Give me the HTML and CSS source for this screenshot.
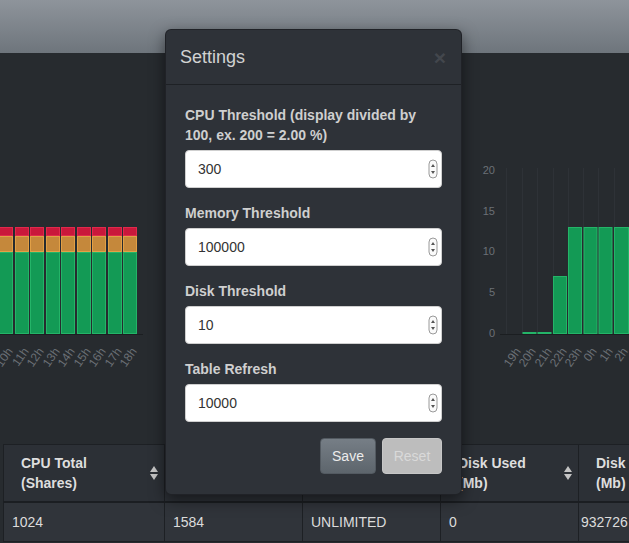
FILE: index.html
```html
<!DOCTYPE html>
<html>
<head>
<meta charset="utf-8">
<title>Settings</title>
<link rel="stylesheet" href="styles.css">
</head>
<body>
<div class="topbar"></div>

<div class="charts">
  <svg class="chart" width="165" height="391" viewBox="0 53 165 391">
    <line x1="0" y1="334.5" x2="143" y2="334.5" class="axis"/>
    <g class="stack">
      <rect class="r" x="-0.5" y="227.5" width="13" height="8"/><rect class="o" x="-0.5" y="236.5" width="13" height="15"/><rect class="g" x="-0.5" y="252.5" width="13" height="81"/>
      <rect class="r" x="15.5" y="227.5" width="13" height="8"/><rect class="o" x="15.5" y="236.5" width="13" height="15"/><rect class="g" x="15.5" y="252.5" width="13" height="81"/>
      <rect class="r" x="30.5" y="227.5" width="13" height="8"/><rect class="o" x="30.5" y="236.5" width="13" height="15"/><rect class="g" x="30.5" y="252.5" width="13" height="81"/>
      <rect class="r" x="46.5" y="227.5" width="13" height="8"/><rect class="o" x="46.5" y="236.5" width="13" height="15"/><rect class="g" x="46.5" y="252.5" width="13" height="81"/>
      <rect class="r" x="61.5" y="227.5" width="13" height="8"/><rect class="o" x="61.5" y="236.5" width="13" height="15"/><rect class="g" x="61.5" y="252.5" width="13" height="81"/>
      <rect class="r" x="77.5" y="227.5" width="13" height="8"/><rect class="o" x="77.5" y="236.5" width="13" height="15"/><rect class="g" x="77.5" y="252.5" width="13" height="81"/>
      <rect class="r" x="92.5" y="227.5" width="13" height="8"/><rect class="o" x="92.5" y="236.5" width="13" height="15"/><rect class="g" x="92.5" y="252.5" width="13" height="81"/>
      <rect class="r" x="108.5" y="227.5" width="13" height="8"/><rect class="o" x="108.5" y="236.5" width="13" height="15"/><rect class="g" x="108.5" y="252.5" width="13" height="81"/>
      <rect class="r" x="123.5" y="227.5" width="13" height="8"/><rect class="o" x="123.5" y="236.5" width="13" height="15"/><rect class="g" x="123.5" y="252.5" width="13" height="81"/>
    </g>
    <g class="xlab">
      <text x="10" y="349" transform="rotate(-55 10 349)">10h</text>
      <text x="26" y="349" transform="rotate(-55 26 349)">11h</text>
      <text x="41" y="349" transform="rotate(-55 41 349)">12h</text>
      <text x="57" y="349" transform="rotate(-55 57 349)">13h</text>
      <text x="72" y="349" transform="rotate(-55 72 349)">14h</text>
      <text x="88" y="349" transform="rotate(-55 88 349)">15h</text>
      <text x="103" y="349" transform="rotate(-55 103 349)">16h</text>
      <text x="119" y="349" transform="rotate(-55 119 349)">17h</text>
      <text x="134" y="349" transform="rotate(-55 134 349)">18h</text>
    </g>
  </svg>

  <svg class="chart" width="166" height="391" viewBox="463 53 166 391">
    <g class="grid">
      <line x1="506.5" y1="168" x2="506.5" y2="334"/>
      <line x1="522.5" y1="168" x2="522.5" y2="334"/>
      <line x1="537.5" y1="168" x2="537.5" y2="334"/>
      <line x1="553.5" y1="168" x2="553.5" y2="334"/>
      <line x1="568.5" y1="168" x2="568.5" y2="334"/>
      <line x1="583.5" y1="168" x2="583.5" y2="334"/>
      <line x1="598.5" y1="168" x2="598.5" y2="334"/>
      <line x1="614.5" y1="168" x2="614.5" y2="334"/>
    </g>
    <line x1="500" y1="334.5" x2="629" y2="334.5" class="axis"/>
    <g class="ylab">
      <text x="495" y="170">20</text>
      <text x="495" y="211">15</text>
      <text x="495" y="251">10</text>
      <text x="495" y="292">5</text>
      <text x="495" y="333">0</text>
    </g>
    <g class="stack">
      <rect class="g" x="523" y="332.5" width="13" height="1"/>
      <rect class="g" x="538" y="332.5" width="13" height="1"/>
      <rect class="g" x="553.5" y="276.5" width="13" height="57"/>
      <rect class="g" x="568.5" y="227.5" width="13" height="106"/>
      <rect class="g" x="584" y="227.5" width="13" height="106"/>
      <rect class="g" x="599" y="227.5" width="13" height="106"/>
      <rect class="g" x="614.5" y="227.5" width="14" height="106"/>
    </g>
    <g class="xlab">
      <text x="518" y="349" transform="rotate(-55 518 349)">19h</text>
      <text x="533" y="349" transform="rotate(-55 533 349)">20h</text>
      <text x="549" y="349" transform="rotate(-55 549 349)">21h</text>
      <text x="564" y="349" transform="rotate(-55 564 349)">22h</text>
      <text x="579" y="349" transform="rotate(-55 579 349)">23h</text>
      <text x="594" y="349" transform="rotate(-55 594 349)">0h</text>
      <text x="610" y="349" transform="rotate(-55 610 349)">1h</text>
      <text x="625" y="349" transform="rotate(-55 625 349)">2h</text>
    </g>
  </svg>
</div>

<div class="table">
  <div class="row head">
    <div class="th"><span>CPU Total<br>(Shares)</span><svg class="sort" width="8" height="14" viewBox="0 0 8 14"><polygon points="0,6 4,0 8,6"/><polygon points="0,8 8,8 4,14"/></svg></div>
    <div class="th"></div>
    <div class="th"></div>
    <div class="th"><span>Disk Used<br>(Mb)</span><svg class="sort" width="8" height="14" viewBox="0 0 8 14"><polygon points="0,6 4,0 8,6"/><polygon points="0,8 8,8 4,14"/></svg></div>
    <div class="th"><span>Disk<br>(Mb)</span></div>
  </div>
  <div class="row body">
    <div class="td">1024</div>
    <div class="td">1584</div>
    <div class="td">UNLIMITED</div>
    <div class="td">0</div>
    <div class="td last">932726</div>
  </div>
</div>

<div class="modal">
  <div class="modal-header">
    <h4 class="modal-title">Settings</h4>
    <span class="close">×</span>
  </div>
  <div class="modal-body">
    <div class="form-group">
      <label>CPU Threshold (display divided by 100, ex. 200 = 2.00 %)</label>
      <div class="input"><input type="text" value="300"><svg class="spin" width="10" height="20" viewBox="0 0 10 20"><rect x="1" y="1" width="8" height="18" rx="4" ry="4"/><polygon points="5,5 3,8 7,8"/><polygon points="3,12 7,12 5,15"/></svg></div>
    </div>
    <div class="form-group">
      <label>Memory Threshold</label>
      <div class="input"><input type="text" value="100000"><svg class="spin" width="10" height="20" viewBox="0 0 10 20"><rect x="1" y="1" width="8" height="18" rx="4" ry="4"/><polygon points="5,5 3,8 7,8"/><polygon points="3,12 7,12 5,15"/></svg></div>
    </div>
    <div class="form-group">
      <label>Disk Threshold</label>
      <div class="input"><input type="text" value="10"><svg class="spin" width="10" height="20" viewBox="0 0 10 20"><rect x="1" y="1" width="8" height="18" rx="4" ry="4"/><polygon points="5,5 3,8 7,8"/><polygon points="3,12 7,12 5,15"/></svg></div>
    </div>
    <div class="form-group">
      <label>Table Refresh</label>
      <div class="input"><input type="text" value="10000"><svg class="spin" width="10" height="20" viewBox="0 0 10 20"><rect x="1" y="1" width="8" height="18" rx="4" ry="4"/><polygon points="5,5 3,8 7,8"/><polygon points="3,12 7,12 5,15"/></svg></div>
    </div>
    <div class="actions">
      <button class="btn save">Save</button>
      <button class="btn reset">Reset</button>
    </div>
  </div>
</div>
</body>
</html>
```

FILE: styles.css
```css
* { box-sizing: border-box; }
html, body { margin: 0; padding: 0; }
body {
  width: 629px;
  height: 543px;
  overflow: hidden;
  position: relative;
  background: #272b2f;
  font-family: "Liberation Sans", Arial, sans-serif;
  font-size: 14px;
  line-height: 20px;
}

.topbar {
  height: 53px;
  background: linear-gradient(#8e949b, #6e757c);
}

.charts {
  height: 391px;
  display: flex;
  justify-content: space-between;
}
.chart { display: block; }
.chart .axis { stroke: #1b1e21; stroke-width: 1; }
.chart .grid line { stroke: #2e3237; stroke-width: 1; }
.chart .stack rect { stroke-width: 1; }
.chart .r { fill: #c9183b; stroke: #e0294c; }
.chart .o { fill: #c5883b; stroke: #e2a046; }
.chart .g { fill: #139a55; stroke: #24b468; }
.chart text {
  font-family: "Liberation Sans", Arial, sans-serif;
  font-size: 11px;
  fill: #6b7076;
}
.chart .xlab text { font-size: 12px; text-anchor: end; dominant-baseline: central; }
.chart .ylab text { text-anchor: end; dominant-baseline: central; }

.table {
  margin-left: 3px;
  border-top: 1px solid #1d2024;
}
.row {
  display: grid;
  grid-template-columns: 161px 138px 138px 138px 1fr;
}
.head {
  background: #2c3036;
  border-bottom: 2px solid #1b1e22;
}
.th {
  display: flex;
  align-items: center;
  justify-content: space-between;
  padding: 8px 6px 8px 17px;
  border-left: 1px solid #1d2024;
  font-weight: bold;
  color: #dedede;
  white-space: nowrap;
}
.sort { display: block; }
.sort polygon { fill: #c4c4c4; }
.body {
  background: #30343a;
  border-bottom: 1px solid #1d2024;
}
.td {
  padding: 9px 8px;
  border-left: 1px solid #1d2024;
  color: #dcdcdc;
  white-space: nowrap;
}
.td.last { padding-left: 2px; }

.modal {
  position: absolute;
  left: 165px;
  top: 29px;
  width: 297px;
  background: #2e3238;
  border: 1px solid rgba(0, 0, 0, 0.3);
  border-radius: 6px;
  box-shadow: 0 5px 15px rgba(0, 0, 0, 0.5);
}
.modal-header {
  display: flex;
  align-items: center;
  justify-content: space-between;
  padding: 15px 14px 14px 14px;
  border-bottom: 1px solid #1e2125;
}
.modal-title {
  margin: 0;
  font-size: 18px;
  font-weight: normal;
  line-height: 25px;
  color: #d2d2d2;
}
.close {
  font-size: 21px;
  font-weight: bold;
  line-height: 20px;
  color: #43474d;
  margin-right: 1px;
}
.modal-body {
  padding: 20px 19px 20px 19px;
}
.form-group { margin-bottom: 15px; }
.form-group label {
  display: block;
  margin-bottom: 5px;
  font-weight: bold;
  color: #cfcfcf;
}
.input {
  height: 38px;
  display: flex;
  align-items: center;
  background: #fff;
  border: 1px solid #cfcfcf;
  border-radius: 4px;
  padding: 0 3px 0 12px;
}
.input input {
  flex: 1;
  min-width: 0;
  border: 0;
  outline: 0;
  padding: 0;
  background: transparent;
  font-family: inherit;
  font-size: 14px;
  color: #333;
}
.spin { display: block; }
.spin rect { fill: #fafafa; stroke: #9a9a9a; stroke-width: 1; }
.spin polygon { fill: #555; }

.actions {
  display: flex;
  justify-content: flex-end;
  gap: 6px;
  padding-top: 1px;
}
.btn {
  height: 36px;
  margin: 0;
  padding: 0;
  border-radius: 4px;
  font-family: inherit;
  font-size: 14px;
}
.save {
  width: 56px;
  background: linear-gradient(#767e86, #5d656c);
  border: 1px solid #535a61;
  color: #ececec;
}
.reset {
  width: 60px;
  background: #bdbdbd;
  border: 1px solid #c6c6c6;
  color: #d9d9d9;
}
```
